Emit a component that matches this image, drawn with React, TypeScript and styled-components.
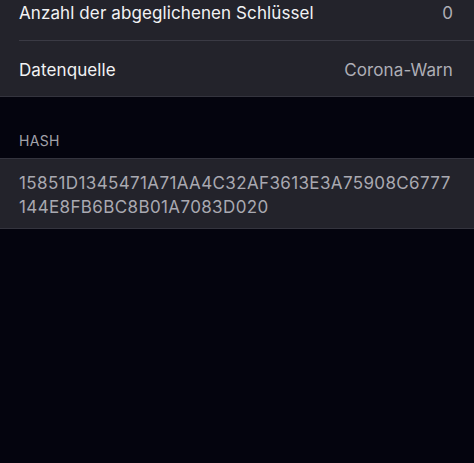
import { createGlobalStyle } from 'styled-components'
import styled from 'styled-components'

const GlobalStyle = createGlobalStyle`
  html, body {
    margin: 0;
    padding: 0;
    background: #04040e;
  }
  body {
    font-family: Inter, "Noto Sans", "Liberation Sans", sans-serif;
    -webkit-font-smoothing: antialiased;
  }
`

const Screen = styled.div`
  width: 474px;
  height: 463px;
  overflow: hidden;
  background: #04040e;
  display: flex;
  flex-direction: column;
`

// the list is scrolled a little, so the first row is cut at the top
const Scroll = styled.div`
  margin-top: -17px;
  display: flex;
  flex-direction: column;
`

const Group = styled.div`
  background: #23232b;
  border-top: 1px solid #34343e;
  border-bottom: 1px solid #34343e;
`

const Row = styled.div<{ last?: boolean }>`
  box-sizing: border-box;
  height: ${({ last }) => (last ? 55 : 57)}px;
  margin-left: 19px;
  padding: 2px 21px 0 0;
  display: flex;
  align-items: center;
  justify-content: space-between;
  border-bottom: ${({ last }) => (last ? 'none' : '1px solid #3a3a44')};
  font-size: 17px;
  letter-spacing: 0.1px;
`

const Label = styled.span`
  color: #f2f2f4;
`

const Value = styled.span`
  color: #aeaeb6;
`

const SectionHeader = styled.div`
  padding: 35px 19px 9px;
  font-size: 14px;
  line-height: 17px;
  color: #a2a2aa;
  letter-spacing: 0.3px;
`

const HashBox = styled.div`
  padding: 12px 19px 9px;
  font-size: 17px;
  line-height: 24px;
  letter-spacing: 0.37px;
  color: #a9a9b1;
`

const HashLine = styled.div`
  white-space: nowrap;
`

const hash = '15851D1345471A71AA4C32AF3613E3A75908C6777144E8FB6BC8B01A7083D020'

function splitHash(value: string, size = 41) {
  const lines: string[] = []
  for (let i = 0; i < value.length; i += size) lines.push(value.slice(i, i + size))
  return lines
}

export default function App() {
  return (
    <Screen>
      <GlobalStyle />
      <Scroll>
        <Group>
          <Row>
            <Label>Anzahl der abgeglichenen Schlüssel</Label>
            <Value>0</Value>
          </Row>
          <Row last>
            <Label>Datenquelle</Label>
            <Value>Corona-Warn</Value>
          </Row>
        </Group>
        <SectionHeader>HASH</SectionHeader>
        <Group>
          <HashBox>
            {splitHash(hash).map((line) => (
              <HashLine key={line}>{line}</HashLine>
            ))}
          </HashBox>
        </Group>
      </Scroll>
    </Screen>
  )
}
